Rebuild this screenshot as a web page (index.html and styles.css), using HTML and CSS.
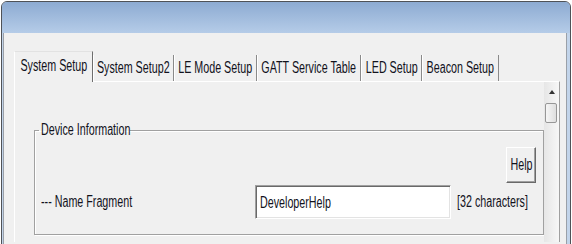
FILE: index.html
```html
<!DOCTYPE html>
<html lang="en">
<head>
    <meta charset="UTF-8">
    <meta name="viewport" content="width=device-width, initial-scale=1.0">
    <title>Setup</title>
    <link rel="stylesheet" href="styles.css">
</head>
<body>

    <div class="window">
        <div class="titlebar"></div>
        <div class="client">
            <div class="tabs">
                <div class="tab active tab-system"><span class="nt">System Setup</span></div>
                <div class="tab tab-system2"><span class="nt">System Setup2</span></div>
                <div class="tab tab-le"><span class="nt">LE Mode Setup</span></div>
                <div class="tab tab-gatt"><span class="nt">GATT Service Table</span></div>
                <div class="tab tab-led"><span class="nt">LED Setup</span></div>
                <div class="tab tab-beacon"><span class="nt">Beacon Setup</span></div>
            </div>
            <div class="panel">
                <div class="page">
                    <fieldset class="group">
                        <legend><span class="nt">Device Information</span></legend>
                        <div class="help-row">
                            <button class="btn" type="button"><span class="nt">Help</span></button>
                        </div>
                        <div class="field-row">
                            <label class="field-label"><span class="nt">--- Name Fragment</span></label>
                            <div class="text-input"><span class="nt">DeveloperHelp</span></div>
                            <span class="hint"><span class="nt">[32 characters]</span></span>
                        </div>
                    </fieldset>
                </div>
                <div class="scrollbar">
                    <div class="scroll-btn"><span class="arrow-up"></span></div>
                    <div class="thumb"></div>
                </div>
            </div>
        </div>
    </div>

</body>
</html>
```

FILE: styles.css
```css
body {
    margin: 0;
    height: 244px;
    overflow: hidden;
    background-color: #fff;
    font-family: "Liberation Sans", Arial, sans-serif;
    font-size: 16px;
    color: #12121c;
}

/* the dialog font is a narrow one, squeeze the text */
.nt {
    display: inline-block;
    white-space: nowrap;
    transform: scaleX(0.67);
    transform-origin: left center;
}

.window {
    margin: 1px 0 0 1px;
    width: 568px;
    height: 270px;
    border: 1px solid #4f5257;
    border-radius: 6px 6px 0 0;
    background-color: #c2d4ea;
}

.titlebar {
    height: 31px;
    border-radius: 5px 5px 0 0;
    background: linear-gradient(#8dabd2, #b5cce8);
}

.client {
    margin: 0 3px 0 1px;
    height: 240px;
    padding: 18px 6px 0 10px;
    background-color: #f0f0f0;
    border-left: 1px solid #9aa0a8;
    border-right: 1px solid #9aa0a8;
}

/* tab strip */
.tabs {
    display: flex;
    align-items: flex-end;
}

.tab {
    box-sizing: border-box;
    display: flex;
    justify-content: center;
    height: 26px;
    line-height: 26px;
    border-left: 1px solid #fff;
    border-right: 1px solid #8a8a8a;
}

.tab .nt {
    transform-origin: center;
}

.tab.active {
    position: relative;
    z-index: 1;
    height: 31px;
    line-height: 27px;
    margin-bottom: -1px;
    border-top: 1px solid #e2e2e2;
    border-right-color: #6e6e6e;
    background-color: #f0f0f0;
}

.tab-system { width: 79px; }
.tab-system2 { width: 81px; }
.tab-le { width: 83px; }
.tab-gatt { width: 104px; }
.tab-led { width: 61px; }
.tab-beacon { width: 77px; }

.panel {
    display: flex;
    height: 160px;
    border-top: 1px solid #fff;
    border-left: 1px solid #fff;
    border-right: 1px solid #a0a0a0;
}

.page {
    width: 529px;
}

/* group box */
.group {
    box-sizing: border-box;
    width: 510px;
    min-width: 0;
    height: 113px;
    margin: 40px 0 0 19px;
    padding: 9px 7px 16px 6px;
    border: 1px solid #a0a0a0;
    box-shadow: inset 1px 1px 0 #fff, 1px 1px 0 #fff;
}

.group legend {
    width: 87px;
    margin-left: -2px;
    padding: 0 2px;
    line-height: 16px;
}

.help-row {
    display: flex;
    justify-content: flex-end;
}

.btn {
    display: flex;
    justify-content: center;
    align-items: center;
    width: 30px;
    height: 36px;
    padding: 0;
    font: inherit;
    color: inherit;
    background-color: #f0f0f0;
    border: 1px solid;
    border-color: #fff #696969 #696969 #fff;
    box-shadow: inset -1px -1px 0 #a0a0a0;
}

.btn .nt {
    transform-origin: center;
}

.field-row {
    display: flex;
    align-items: center;
    margin-top: 2px;
}

.field-label {
    flex-shrink: 0;
    width: 214px;
}

.text-input {
    flex-shrink: 0;
    box-sizing: border-box;
    display: flex;
    align-items: center;
    width: 196px;
    height: 34px;
    padding: 1px 4px 0;
    overflow: hidden;
    background-color: #fff;
    border: 1px solid;
    border-color: #a0a0a0 #fff #fff #a0a0a0;
    box-shadow: inset 1px 1px 0 #696969, inset -1px -1px 0 #e3e3e3;
}

.hint {
    min-width: 0;
    margin-left: 6px;
}

/* vertical scrollbar */
.scrollbar {
    width: 15px;
    background: linear-gradient(to right, #e6e6e6, #f7f7f7);
}

.scroll-btn {
    display: flex;
    justify-content: center;
    align-items: center;
    height: 20px;
}

.arrow-up {
    width: 0;
    height: 0;
    border-left: 3px solid transparent;
    border-right: 3px solid transparent;
    border-bottom: 4px solid #333;
}

.thumb {
    box-sizing: border-box;
    width: 12px;
    height: 20px;
    margin: 1px 0 0 1px;
    border: 1px solid #979797;
    border-radius: 2px;
    background: linear-gradient(to right, #f6f6f6, #dedede);
}
```
